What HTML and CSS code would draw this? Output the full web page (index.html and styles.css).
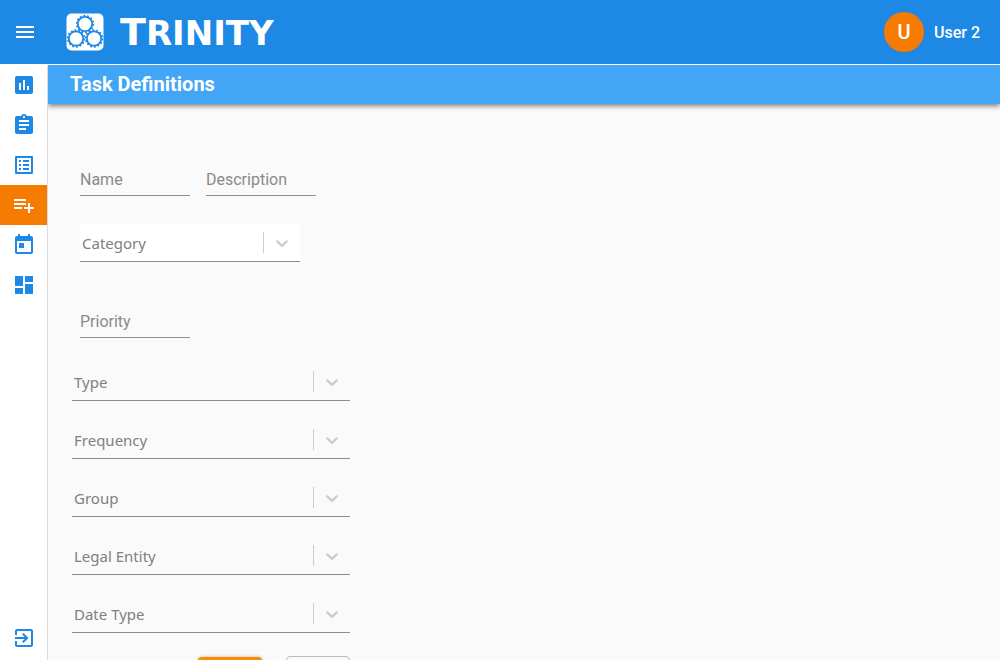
FILE: index.html
```html
<!DOCTYPE html>
<html lang="en">
<head>
<meta charset="utf-8">
<title>Task Definitions</title>
<link rel="stylesheet" href="styles.css">
</head>
<body>
<svg class="symbols" aria-hidden="true">
  <symbol id="chevron" viewBox="0 0 20 20"><path d="M4.516 7.548c0.436-0.446 1.043-0.481 1.576 0l3.908 3.747 3.908-3.747c0.533-0.481 1.141-0.446 1.574 0 0.436 0.445 0.408 1.197 0 1.615-0.406 0.418-4.695 4.502-4.695 4.502-0.217 0.223-0.502 0.335-0.787 0.335s-0.570-0.112-0.789-0.335c0 0-4.287-4.084-4.695-4.502s-0.436-1.170 0-1.615z"/></symbol>
</svg>
<header class="topbar">
  <button class="menu-button" type="button" aria-label="Menu">
    <svg class="icon" viewBox="0 0 24 24"><path d="M3 18h18v-2H3v2zm0-5h18v-2H3v2zm0-7v2h18V6H3z"/></svg>
  </button>
  <a class="brand" href="#">
    <svg class="brand-mark" viewBox="0 0 38 38">
      <rect x=".5" y=".5" width="37" height="37" rx="5" fill="#fff"/>
      <g fill="none" stroke="#1e88e5">
        <g stroke-width="1.800"><circle cx="19" cy="11" r="7.200"/><circle cx="10" cy="25.500" r="7.200"/><circle cx="28" cy="25.500" r="7.200"/></g>
        <g stroke-width="1.600" stroke-dasharray="1.900 1.840"><circle cx="19" cy="11" r="8.333"/><circle cx="10" cy="25.500" r="8.333"/><circle cx="28" cy="25.500" r="8.333"/></g>
      </g>
    </svg>
    <span class="brand-name"><span class="brand-initial">T</span>RINITY</span>
  </a>
  <div class="user">
    <span class="avatar">U</span>
    <span class="user-name">User 2</span>
  </div>
</header>
<div class="shell">
  <nav class="sidebar">
    <a class="nav-item" href="#" aria-label="Reports"><svg class="icon" viewBox="0 0 24 24"><path d="M19 3H5c-1.100 0-2 .9-2 2v14c0 1.100.9 2 2 2h14c1.100 0 2-.9 2-2V5c0-1.100-.9-2-2-2zM9 17H7v-7h2v7zm4 0h-2V7h2v10zm4 0h-2v-4h2v4z"/></svg></a>
    <a class="nav-item" href="#" aria-label="Tasks"><svg class="icon" viewBox="0 0 24 24"><path d="M19 3h-4.180C14.400 1.840 13.300 1 12 1c-1.300 0-2.400.84-2.820 2H5c-1.100 0-2 .9-2 2v14c0 1.100.9 2 2 2h14c1.100 0 2-.9 2-2V5c0-1.100-.9-2-2-2zm-7 0c.55 0 1 .45 1 1s-.45 1-1 1-1-.45-1-1 .45-1 1-1zm2 14H7v-2h7v2zm3-4H7v-2h10v2zm0-4H7V7h10v2z"/></svg></a>
    <a class="nav-item" href="#" aria-label="List"><svg class="icon" viewBox="0 0 24 24"><path d="M19 5v14H5V5h14m1.100-2H3.900c-.5 0-.9.4-.9.9v16.200c0 .4.4.9.9.9h16.200c.4 0 .9-.5.9-.9V3.900c0-.5-.5-.9-.9-.9zM11 7h6v2h-6V7zm0 4h6v2h-6v-2zm0 4h6v2h-6zM7 7h2v2H7zm0 4h2v2H7zm0 4h2v2H7z"/></svg></a>
    <a class="nav-item nav-item-active" href="#" aria-label="Task Definitions" aria-current="page"><svg class="icon" viewBox="0 0 24 24"><path d="M14 10H2v2h12v-2zm0-4H2v2h12V6zm4 8v-4h-2v4h-4v2h4v4h2v-4h4v-2h-4zM2 16h8v-2H2v2z"/></svg></a>
    <a class="nav-item" href="#" aria-label="Calendar"><svg class="icon" viewBox="0 0 24 24"><path d="M19 3h-1V1h-2v2H8V1H6v2H5c-1.110 0-1.990.9-1.990 2L3 19c0 1.100.89 2 2 2h14c1.100 0 2-.9 2-2V5c0-1.100-.9-2-2-2zm0 16H5V8h14v11zM7 10h5v5H7z"/></svg></a>
    <a class="nav-item" href="#" aria-label="Dashboard"><svg class="icon" viewBox="0 0 24 24"><path d="M3 13h8V3H3v10zm0 8h8v-6H3v6zm10 0h8V11h-8v10zm0-18v6h8V3h-8z"/></svg></a>
    <a class="nav-item nav-item-last" href="#" aria-label="Log out"><svg class="icon" viewBox="0 0 24 24"><path d="M10.090 15.590L11.500 17l5-5-5-5-1.410 1.410L12.670 11H3v2h9.670l-2.580 2.590zM19 3H5c-1.110 0-2 .9-2 2v4h2V5h14v14H5v-4H3v4c0 1.100.89 2 2 2h14c1.100 0 2-.9 2-2V5c0-1.100-.9-2-2-2z"/></svg></a>
  </nav>
  <main class="content">
    <h1 class="page-title">Task Definitions</h1>
    <form class="form">
      <div class="field-group">
        <div class="text-row">
          <input class="text-field" type="text" placeholder="Name" aria-label="Name">
          <input class="text-field" type="text" placeholder="Description" aria-label="Description">
        </div>
        <div class="select-field select-field-filled">
          <select class="select" aria-label="Category"><option>Category</option></select>
          <span class="select-arrow"><svg class="chevron"><use href="#chevron"/></svg></span>
        </div>
        <div class="text-row text-row-spaced">
          <input class="text-field" type="text" placeholder="Priority" aria-label="Priority">
        </div>
      </div>
      <div class="select-list">
        <div class="select-field">
          <select class="select" aria-label="Type"><option>Type</option></select>
          <span class="select-arrow"><svg class="chevron"><use href="#chevron"/></svg></span>
        </div>
        <div class="select-field">
          <select class="select" aria-label="Frequency"><option>Frequency</option></select>
          <span class="select-arrow"><svg class="chevron"><use href="#chevron"/></svg></span>
        </div>
        <div class="select-field">
          <select class="select" aria-label="Group"><option>Group</option></select>
          <span class="select-arrow"><svg class="chevron"><use href="#chevron"/></svg></span>
        </div>
        <div class="select-field">
          <select class="select" aria-label="Legal Entity"><option>Legal Entity</option></select>
          <span class="select-arrow"><svg class="chevron"><use href="#chevron"/></svg></span>
        </div>
        <div class="select-field">
          <select class="select" aria-label="Date Type"><option>Date Type</option></select>
          <span class="select-arrow"><svg class="chevron"><use href="#chevron"/></svg></span>
        </div>
      </div>
      <div class="actions">
        <button class="button button-primary" type="submit"></button>
        <button class="button button-outlined" type="button"></button>
      </div>
    </form>
  </main>
</div>
</body>
</html>
```
FILE: styles.css
```css
* { box-sizing: border-box; }

body {
  margin: 0;
  height: 100vh;
  display: flex;
  flex-direction: column;
  background: #fafafa;
  font-family: Roboto, "Liberation Sans", sans-serif;
}

.symbols { display: none; }

.icon {
  display: block;
  width: 24px;
  height: 24px;
  fill: currentColor;
}

.topbar {
  flex: none;
  display: flex;
  align-items: center;
  height: 65px;
  padding: 0 20px 0 13px;
  background: #1e88e5;
  border-bottom: 1px solid #fff;
  color: #fff;
}

.menu-button {
  padding: 0;
  border: 0;
  background: none;
  color: inherit;
}

.brand {
  display: flex;
  align-items: center;
  gap: 16px;
  margin-left: 29px;
  color: inherit;
  text-decoration: none;
}

.brand-mark {
  width: 38px;
  height: 38px;
}

.brand-name {
  font-family: "DejaVu Sans", sans-serif;
  font-size: 34px;
  font-weight: 700;
  line-height: 40px;
}

.brand-initial { font-size: 38px; }

.user {
  display: flex;
  align-items: center;
  gap: 10px;
  margin-left: auto;
  font-size: 16px;
  font-weight: 500;
}

.avatar {
  display: grid;
  place-items: center;
  width: 40px;
  height: 40px;
  border-radius: 50%;
  background: #f57c00;
  font-size: 20px;
}

.shell {
  flex: 1;
  min-height: 0;
  display: flex;
}

.sidebar {
  flex: none;
  display: flex;
  flex-direction: column;
  width: 48px;
  padding-bottom: 2px;
  background: #fff;
  border-right: 1px solid #dcdcdc;
}

.nav-item {
  display: grid;
  place-items: center;
  height: 40px;
  padding-left: 1px;
  color: #1e88e5;
}

.nav-item-active {
  background: #f57c00;
  color: #fff;
}

.nav-item-last { margin-top: auto; }

.content {
  flex: 1;
  min-width: 0;
  overflow: auto;
  scrollbar-width: none;
}

.page-title {
  margin: 0;
  padding: 0 22px;
  background: #42a5f5;
  box-shadow: 0 2px 5px rgba(0, 0, 0, 0.5);
  color: #fff;
  font-size: 20px;
  font-weight: 700;
  line-height: 39px;
}

.form {
  max-width: 326px;
  padding: 60px 24px 24px;
}

.field-group { padding: 0 8px; }

.text-row {
  display: flex;
  gap: 16px;
}

.text-row-spaced { margin-top: 44px; }

.text-field {
  width: 110px;
  height: 32px;
  padding: 0;
  border: 0;
  border-bottom: 1px solid #919191;
  background: none;
  color: #333;
  font: 400 16px Roboto, "Liberation Sans", sans-serif;
}

.text-field::placeholder { color: #8a8a8a; }

.select-field {
  display: flex;
  align-items: center;
  height: 38px;
  border-bottom: 1px solid #8c8c8c;
}

.select-field-filled {
  width: 220px;
  margin-top: 28px;
  background: #fff;
}

.select {
  flex: 1;
  min-width: 0;
  height: 36px;
  padding: 0 2px;
  border: 0;
  appearance: none;
  background: none;
  color: #808080;
  font: 400 15px "Noto Sans", sans-serif;
}

.select-arrow {
  display: grid;
  place-items: center;
  width: 37px;
  height: 21px;
  border-left: 1px solid #ccc;
  pointer-events: none;
}

.chevron {
  width: 20px;
  height: 20px;
  fill: #ccc;
}

.select-list {
  display: grid;
  gap: 20px;
  margin-top: 25px;
}

.actions {
  display: flex;
  justify-content: flex-end;
  gap: 24px;
  margin-top: 23px;
}

.button {
  width: 64px;
  height: 36px;
  border-radius: 4px;
}

.button-primary {
  margin-top: 1px;
  border: 0;
  background: #fb8c00;
  box-shadow: 0 1px 4px rgba(0, 0, 0, 0.4);
}

.button-outlined {
  border: 1px solid #bbb;
  background: none;
}
```
